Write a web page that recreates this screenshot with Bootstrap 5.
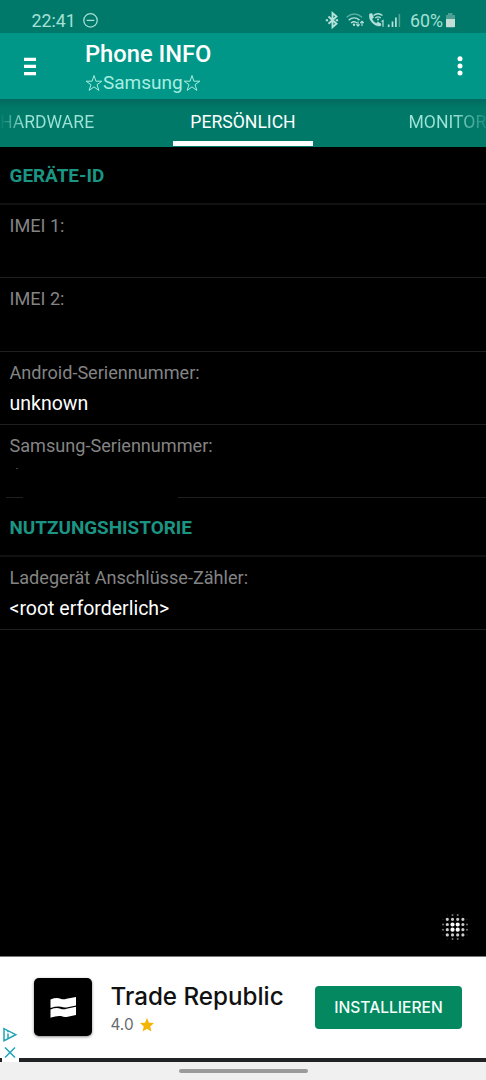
<!DOCTYPE html>
<html lang="de">
<head>
<meta charset="utf-8">
<meta name="viewport" content="width=device-width, initial-scale=1">
<title>Phone INFO</title>
<link href="https://cdn.jsdelivr.net/npm/bootstrap@5.3.0/dist/css/bootstrap.min.css" rel="stylesheet">
<style>
body{font-family:Roboto,"DejaVu Sans",sans-serif;background:#000;line-height:1}
.screen{width:486px;height:1080px}
.statusbar{height:33px;background:#00796a;color:#a5e0d6;font-size:17.8px;padding:7px 30px 0 31.5px}
.status-text{line-height:27px}
.statusbar svg,.appbar svg,.ad svg{display:block;flex:none}
.dnd{margin-left:7px}
.battery{margin-left:2px}
.appbar{height:66px;background:#009788;padding:0 17px 0 23px}
.titles{margin-left:49px;padding-top:2px}
.app-title{font-size:23.7px;font-weight:500;line-height:28px;color:#fff}
.app-sub{font-size:19px;line-height:24px;color:#a8ede0;margin-top:3px}
.tabs{height:47.5px;background:linear-gradient(#006a5e,#007969 9px);font-size:17.6px;white-space:nowrap}
.tab-item{line-height:47px;color:#9de3d7}
.tab-item.fade-l{width:173px;background:linear-gradient(90deg,#00796a 0,#9de3d7 24px);-webkit-background-clip:text;background-clip:text;color:transparent}
.tab-item.fade-r{width:173px;padding-left:95.5px;background:linear-gradient(90deg,#9de3d7 140px,#1a897b 173px);-webkit-background-clip:text;background-clip:text;color:transparent}
.tab-item.current{width:140px;color:#fff;border-bottom:5px solid #fff;height:47px}
.group-head{height:58.5px;padding:19px 9.5px 0;font-size:18.9px;line-height:20px;font-weight:700;color:#1b9583;border-bottom:2px solid #121212}
.entry + .group-head{padding-top:20px}
.entry{height:73.3px;padding:11.2px 9.5px 0;border-bottom:1px solid #202020;font-size:18.1px;line-height:20px;color:#848484}
.entry .val{color:#fff;font-size:19.5px;margin-top:11px}
.entry.gap-line{border-image:linear-gradient(90deg,#000 7px,#202020 7px 24px,#000 24px 178px,#202020 178px) 1}
.speck{width:2px;height:1px;background:#444;margin:12px 0 0 6px}
.dots{right:17px;bottom:15px}
.ad{height:106px;background:#fff;border-top:1px solid #777;border-bottom:4px solid #202224;padding-left:34px;font-family:Inter,"Open Sans",sans-serif}
.ad-icon{width:58px;height:58px;border-radius:5px;background:#000;box-shadow:0 1px 3px #0007;margin-top:21px}
.ad-text{margin:26px 0 0 18.5px;width:204.5px}
.ad-name{font-size:24.2px;line-height:28px;color:#111;white-space:nowrap;font-weight:450}
.ad-rate{font-size:15.3px;line-height:18px;color:#66696d;margin-top:4.5px}
.rate-star{margin-left:6px}
.btn.ad-btn{width:147px;height:43px;margin-top:29px;padding:0;border:0;border-radius:4px;background:#04885f;color:#f3fffb;font-size:15.6px;font-weight:500;line-height:43px}
.ad-mark{left:2px;bottom:-4px;background:#fff;padding-bottom:2px}
.gesture{height:18px;background:#f0f0f0;padding-top:7px}
.pill{width:129px;height:4px;background:#9b9b9b}
</style>
</head>
<body>
<main class="screen d-flex flex-column overflow-hidden">
  <div class="statusbar d-flex">
    <span class="status-text">22:41</span>
    <svg class="dnd" width="15" height="27" viewBox="0 0 15 27" fill="none" stroke="currentColor" stroke-width="1.3"><circle cx="7.5" cy="13.4" r="6.7"/><path d="M3.7 13.4h7.6"/></svg>
    <svg class="ms-auto" width="78" height="25" viewBox="324.500 7 78 25" fill="none" stroke="#b4e1da" stroke-width="1.4">
      <path d="M329 16.5l8 7.3-4 3.4V13l4 3.5-8 7.3" stroke-width="1.9"/><path d="M326.3 20.2h2.3m7.6 0h2.4" stroke-width="2"/>
      <path d="M347 17.2q8-6.4 15.5 0" stroke="#5aaca1"/><path d="M349.2 20.1q5.5-4.4 10.8 0M351.5 23q3.2-2.6 6 0"/><circle cx="354.5" cy="24.8" r="1.2" fill="#b4e1da" stroke="none"/><path d="M358.5 21.5v4.5m-1.7-1.7 1.7 1.8 1.7-1.8M362.5 26v-4.8m-1.7 1.8 1.7-1.8 1.7 1.8" stroke-width="1.1"/>
      <path d="M370 14l2.4-.5 1.6 4-1.7 1.4q1.3 3 4.4 4.5l1.6-1.5 3.3 2-.8 2q-3.8 1-7.8-3t-3-8.9z" fill="#b4e1da" stroke-width=".6"/><path d="M374 15.5q4.5-3.6 9 0M375.8 18q2.7-2.2 5.4 0"/><circle cx="378.5" cy="19.5" r="1" fill="#b4e1da" stroke="none"/><path d="M382 21.5l1.500-1v6.200" stroke-width="1.200"/>
      <path d="M389.2 24.5v2.5M393 21.5v5.5M396.4 17.5v9.5" stroke-width="1.700"/><path d="M399.9 14v13" stroke="#4fa397" stroke-width="1.500"/>
    </svg>
    <span class="status-text ms-2">60%</span>
    <svg class="battery" width="11" height="26" viewBox="0 0 11 26"><path d="M3 6h4.500v2H10v5H1V8h2z" fill="#4d9f93"/><path d="M1 12h9v7.500q0 .8-.8.800H1.800Q1 20.300 1 19.500z" fill="#c2ded7"/></svg>
  </div>

  <header class="appbar d-flex align-items-center">
    <svg width="13" height="20" viewBox="0 0 13 20" fill="#fff"><path d="M1 1.800h12v3.200H1zM1 8.800h12v3.200H1zM1 16h12v3.200H1z"/></svg>
    <div class="titles">
      <div class="app-title">Phone INFO</div>
      <div class="app-sub d-flex align-items-center">
        <svg width="18" height="20" viewBox="0 0 18 20" fill="none" stroke="currentColor"><path d="M9 2.500l1.900 5.700h6L12 11.700l1.900 5.700L9 13.900l-4.900 3.500L6 11.700 1.100 8.200h6z"/></svg>
        <span>Samsung</span>
        <svg width="18" height="20" viewBox="0 0 18 20" fill="none" stroke="currentColor"><path d="M9 2.500l1.900 5.700h6L12 11.700l1.900 5.700L9 13.900l-4.900 3.500L6 11.700 1.100 8.200h6z"/></svg>
      </div>
    </div>
    <svg class="ms-auto" width="18" height="24" viewBox="0 0 18 24" fill="#fff"><circle cx="9" cy="4.800" r="2.500"/><circle cx="9" cy="12" r="2.500"/><circle cx="9" cy="19" r="2.500"/></svg>
  </header>

  <nav class="tabs d-flex flex-shrink-0">
    <div class="tab-item fade-l">HARDWARE</div>
    <div class="tab-item current text-center">PERSÖNLICH</div>
    <div class="tab-item fade-r overflow-hidden">MONITOR</div>
  </nav>

  <section class="flex-grow-1 position-relative">
    <div class="group-head">GERÄTE-ID</div>
    <div class="entry">IMEI 1:</div>
    <div class="entry">IMEI 2:</div>
    <div class="entry">Android-Seriennummer:<div class="val">unknown</div></div>
    <div class="entry gap-line">Samsung-Seriennummer:<div class="speck"></div></div>
    <div class="group-head">NUTZUNGSHISTORIE</div>
    <div class="entry">Ladegerät Anschlüsse-Zähler:<div class="val">&lt;root erforderlich&gt;</div></div>
    <svg class="dots position-absolute" width="28" height="28" viewBox="0 0 28 28" stroke-linecap="round" fill="none">
      <g stroke="#fff" stroke-width="4.200"><path d="M11.500 11.500h0M16.700 11.500h0M11.500 16.700h0M16.700 16.700h0"/></g>
      <g stroke="#ccc" stroke-width="3.200"><path d="M6.300 6.300h0M11.500 6.300h0M16.700 6.300h0M21.900 6.300h0M6.300 11.500h0M21.900 11.500h0M6.300 16.700h0M21.900 16.700h0M6.300 21.900h0M11.500 21.900h0M16.700 21.900h0M21.900 21.900h0"/></g>
      <g stroke="#777" stroke-width="2"><path d="M11.500 2h0M16.700 2h0M11.500 26h0M16.700 26h0M2 11.500h0M2 16.700h0M26 11.500h0M26 16.700h0"/></g>
      <g stroke="#333" stroke-width="1.200"><path d="M6.300 2h0M21.900 2h0M6.300 26h0M21.900 26h0M2 6.300h0M2 21.900h0M26 6.300h0M26 21.900h0"/></g>
    </svg>
  </section>

  <aside class="ad d-flex align-items-start position-relative z-1 flex-shrink-0">
    <div class="ad-icon"><svg width="58" height="58" viewBox="0 0 58 58" fill="#fff"><path d="M16.500 21.500q6-2.500 10-.8 3 1 6 0l9.500-1.700v8.500l-9.500 1.900q-2.500.6-5.500-.6-4-.9-10.500 1.200zM16.500 31.500q6-2.500 10-.8 3 1 6 0l9.500-2v8.300l-9.500 1.900q-2.500.4-5.500-.8-4-.7-10.500 1.600z"/></svg></div>
    <div class="ad-text">
      <div class="ad-name">Trade Republic</div>
      <div class="ad-rate d-flex"><span>4.0</span><svg class="rate-star" width="14" height="17" viewBox="0 0 14 17"><path d="M7 2l2 4.700 5 .4-3.800 3.300 1.200 5L7 12.700l-4.400 2.700 1.200-5L0 7.100l5-.4z" fill="#f4b400"/></svg></div>
    </div>
    <button type="button" class="btn ad-btn">INSTALLIEREN</button>
    <div class="ad-mark position-absolute"><svg width="17" height="34" viewBox="0 0 17 34" fill="none" stroke="#20a4b5" stroke-width="1.500"><path d="M2 2.700v12L13.800 8.700z"/><path d="M6 7.500v4.500M6 5v1.200"/><path d="M3 21.500l10 10M13 21.500l-10 10"/></svg></div>
  </aside>
  <div class="gesture"><div class="pill rounded-pill mx-auto"></div></div>
</main>
<script src="https://cdn.jsdelivr.net/npm/bootstrap@5.3.0/dist/js/bootstrap.bundle.min.js"></script>
</body>
</html>
